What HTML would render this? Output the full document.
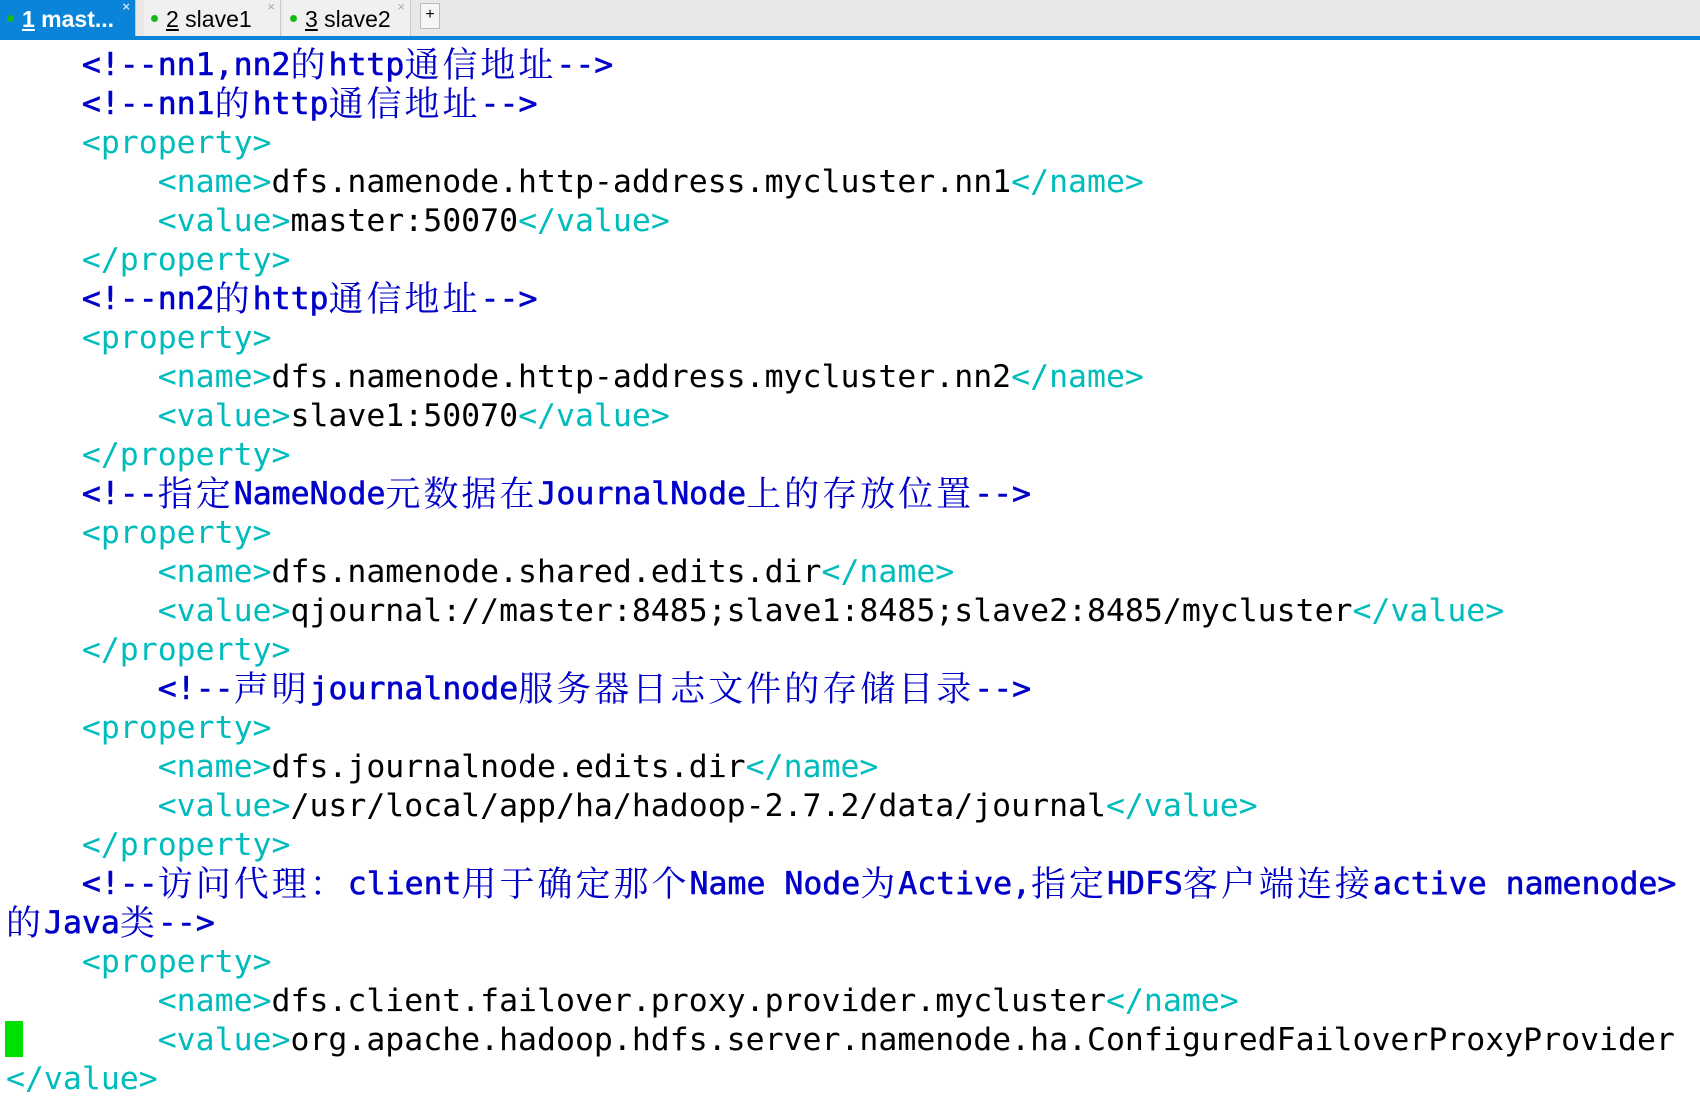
<!DOCTYPE html>
<html><head><meta charset="utf-8"><style>
body{margin:0;width:1700px;height:1100px;background:#fff;overflow:hidden;position:relative;font-family:"Liberation Sans",sans-serif}
.bar{position:absolute;left:0;top:0;width:1700px;height:37px;background:#e8e8e8}
.line{position:absolute;left:0;top:36px;width:1700px;height:4px;background:#0a84d8}
.tab{position:absolute;top:0;height:36px;font-size:23px;line-height:38px;color:#000;border-right:1px solid #c8c8c8;background:#f0f0f0}
.tab u{text-decoration:underline}
.dot{display:inline-block;width:7px;height:7px;border-radius:50%;background:#18b818;vertical-align:middle;margin:0 8px 4px 7px}
.x{position:absolute;right:5px;top:-12px;font-size:13px;color:#aaa}
.plus{position:absolute;left:420px;top:3px;width:18px;height:24px;border:1px solid #bbb;background:#f6f6f6;font-size:16px;text-align:center;line-height:22px}
pre{position:absolute;left:6px;top:46px;margin:0;font-family:"DejaVu Sans Mono","Liberation Mono",monospace;font-size:31.5px;line-height:39px;color:#000;white-space:pre}
.t{color:#00bcbc}.c{color:#0000c8;-webkit-text-stroke:0.6px #0000c8}
.k{font-family:"Noto Serif CJK SC","Noto Sans CJK SC",serif;font-size:35px;letter-spacing:3px;line-height:0;-webkit-text-stroke:0;position:relative;top:2px}
.cur{position:absolute;left:5px;top:1021px;width:18px;height:36px;background:#00e000}
</style></head><body>
<div class="bar"></div><div class="line"></div>
<div class="tab" style="left:0;width:135px;background:#0a84d8;color:#fff;font-weight:bold"><span class="dot"></span><u>1</u> mast...<span class="x" style="color:#cde">×</span></div>
<div class="tab" style="left:144px;width:136px"><span class="dot"></span><u>2</u> slave1<span class="x">×</span></div>
<div class="tab" style="left:283px;width:127px"><span class="dot"></span><u>3</u> slave2<span class="x">×</span></div>
<div class="plus">+</div>
<pre><span class="c">    &lt;!--nn1,nn2<span class="k">的</span>http<span class="k">通信地址</span>--&gt;</span>
<span class="c">    &lt;!--nn1<span class="k">的</span>http<span class="k">通信地址</span>--&gt;</span>
<span class="t">    &lt;property&gt;</span>
        <span class="t">&lt;name&gt;</span>dfs.namenode.http-address.mycluster.nn1<span class="t">&lt;/name&gt;</span>
        <span class="t">&lt;value&gt;</span>master:50070<span class="t">&lt;/value&gt;</span>
<span class="t">    &lt;/property&gt;</span>
<span class="c">    &lt;!--nn2<span class="k">的</span>http<span class="k">通信地址</span>--&gt;</span>
<span class="t">    &lt;property&gt;</span>
        <span class="t">&lt;name&gt;</span>dfs.namenode.http-address.mycluster.nn2<span class="t">&lt;/name&gt;</span>
        <span class="t">&lt;value&gt;</span>slave1:50070<span class="t">&lt;/value&gt;</span>
<span class="t">    &lt;/property&gt;</span>
<span class="c">    &lt;!--<span class="k">指定</span>NameNode<span class="k">元数据在</span>JournalNode<span class="k">上的存放位置</span>--&gt;</span>
<span class="t">    &lt;property&gt;</span>
        <span class="t">&lt;name&gt;</span>dfs.namenode.shared.edits.dir<span class="t">&lt;/name&gt;</span>
        <span class="t">&lt;value&gt;</span>qjournal://master:8485;slave1:8485;slave2:8485/mycluster<span class="t">&lt;/value&gt;</span>
<span class="t">    &lt;/property&gt;</span>
<span class="c">        &lt;!--<span class="k">声明</span>journalnode<span class="k">服务器日志文件的存储目录</span>--&gt;</span>
<span class="t">    &lt;property&gt;</span>
        <span class="t">&lt;name&gt;</span>dfs.journalnode.edits.dir<span class="t">&lt;/name&gt;</span>
        <span class="t">&lt;value&gt;</span>/usr/local/app/ha/hadoop-2.7.2/data/journal<span class="t">&lt;/value&gt;</span>
<span class="t">    &lt;/property&gt;</span>
<span class="c">    &lt;!--<span class="k">访问代理：</span>client<span class="k">用于确定那个</span>Name Node<span class="k">为</span>Active,<span class="k">指定</span>HDFS<span class="k">客户端连接</span>active namenode&gt;</span>
<span class="c"><span class="k">的</span>Java<span class="k">类</span>--&gt;</span>
<span class="t">    &lt;property&gt;</span>
        <span class="t">&lt;name&gt;</span>dfs.client.failover.proxy.provider.mycluster<span class="t">&lt;/name&gt;</span>
        <span class="t">&lt;value&gt;</span>org.apache.hadoop.hdfs.server.namenode.ha.ConfiguredFailoverProxyProvider
<span class="t">&lt;/value&gt;</span></pre>
<div class="cur"></div>
</body></html>
